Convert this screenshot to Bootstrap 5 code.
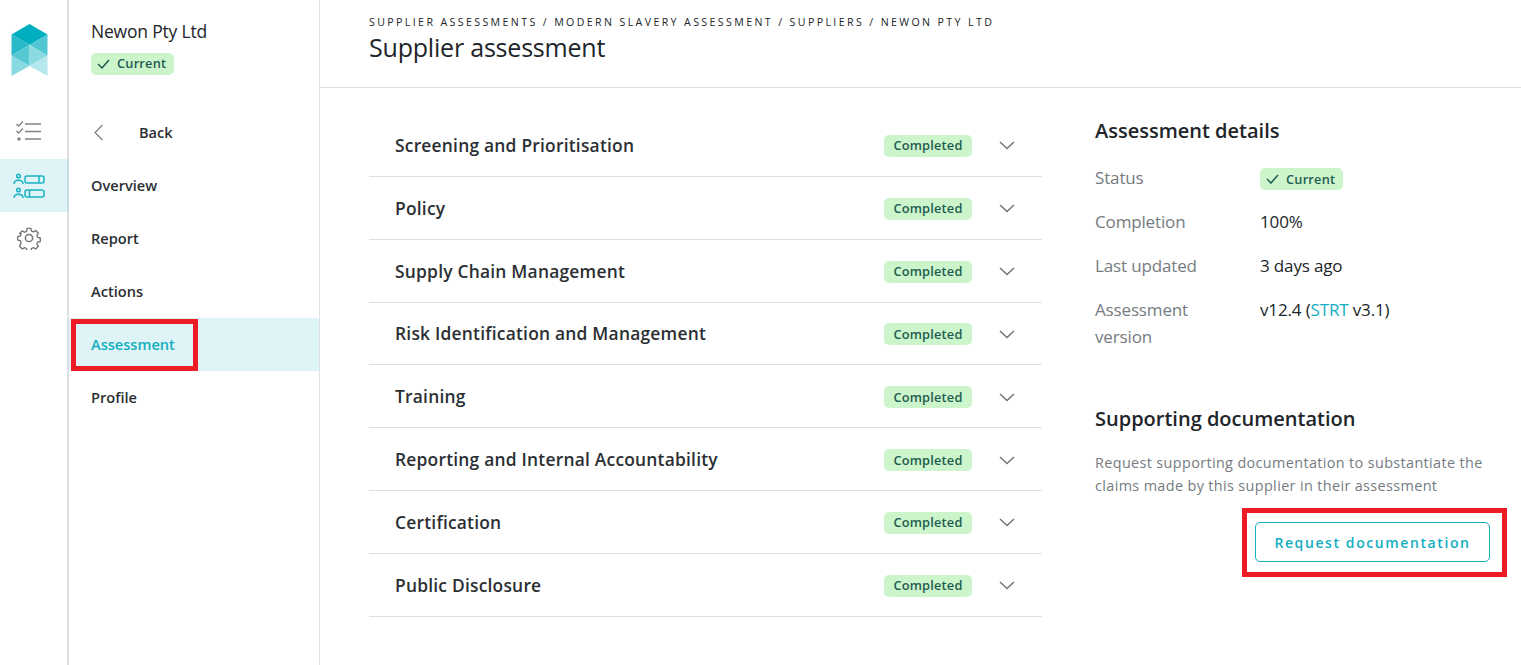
<!DOCTYPE html>
<html lang="en">
<head>
  <meta charset="UTF-8">
  <title>Supplier assessment</title>
  <meta name="viewport" content="width=device-width, initial-scale=1">
  <link href="https://cdn.jsdelivr.net/npm/bootstrap@5.3.0/dist/css/bootstrap.min.css" rel="stylesheet">
  <style>
    html, body { height: 100%; overflow: hidden; }
    body { font-family: "Open Sans", "Noto Sans", sans-serif; color: #212529; background: #fff; }
    .shell { height: 665px; }
    .rail { width: 69px; flex: none; border-right: 2px solid #e0e0e0; padding-top: 24px; }
    .rail-logo { display: block; margin-left: 11px; margin-bottom: 30px; }
    .rail-item { height: 53px; display: flex; align-items: center; padding-left: 13px; }
    .rail-item.on { background: #def4f6; border-right: 2px solid #c5dfe3; margin-right: -2px; }
    .rail-list { margin-left: 3px; margin-top: -2px; }
    .rail-gear { margin-left: 4px; margin-top: -2px; }
    .side { width: 251px; flex: none; border-right: 1px solid #e0e0e0; }
    .side-head { padding: 19px 22px 0; height: 106px; }
    .side-name { font-size: 17.500px; line-height: 24px; letter-spacing: -.2px; margin-bottom: 8px; }
    .pill { display: inline-flex; align-items: center; justify-content: center; height: 22px; border-radius: 5px; background: #ccf5cb; color: #1f5c50; font-size: 12.800px; font-weight: 600; letter-spacing: .2px; }
    .pill-icon { padding: 0 8px 0 6px; gap: 7px; }
    .pill-text { width: 88px; flex: none; }
    .side-link { display: flex; align-items: center; height: 53px; padding-left: 22px; font-size: 14.600px; font-weight: 600; color: #2b2f33; text-decoration: none; }
    .side-link.on { background: #def4f6; color: #12aebf; }
    .side-back { gap: 35px; padding-left: 24px; }
    .main-head { height: 88px; border-bottom: 1px solid #e0e0e0; padding: 15px 49px 0; }
    .crumbs { font-size: 10.600px; line-height: 15px; letter-spacing: 2.390px; color: #212529; text-transform: uppercase; white-space: nowrap; }
    .page-title { font-size: 25px; line-height: 35px; font-weight: 400; letter-spacing: -.2px; margin: 0; }
    .main-body { padding: 26px 0 0 49px; gap: 53px; }
    .sections { width: 673px; flex: none; }
    .sec-row { height: 62.850px; display: flex; align-items: center; padding: 2px 0 0 26px; border-bottom: 1px solid #e0e0e0; }
    .sec-name { font-size: 17.400px; font-weight: 600; letter-spacing: .22px; color: #2b2f33; flex-grow: 1; margin-top: -2px; }
    .sec-chev { margin: 0 27px; flex: none; }
    .info { width: 400px; flex: none; padding-top: 3px; }
    .info-title { font-size: 20px; line-height: 28px; font-weight: 600; margin: 0; color: #212529; }
    .info-head { margin-bottom: 19px; }
    .info-row { display: flex; font-size: 17px; line-height: 27px; letter-spacing: -.15px; margin-bottom: 17px; }
    .info-key { width: 165px; flex: none; color: #757b80; }
    .info-key-wrap { width: 110px; margin-right: 55px; }
    .info-link { color: #12aebf; text-decoration: none; }
    .docs-title { margin-top: 55px; }
    .docs-text { font-size: 14.400px; line-height: 23px; letter-spacing: .37px; color: #757b80; margin: 18px 0 0; white-space: nowrap; }
    .doc-btn { --bs-btn-color: #12aebf; --bs-btn-border-color: #12aebf; --bs-btn-hover-bg: #def4f6; --bs-btn-hover-color: #12aebf; --bs-btn-hover-border-color: #12aebf; width: 235px; height: 40px; font-size: 14px; font-weight: 600; letter-spacing: 1.600px; padding: 0; border-radius: 5px; margin: 25px 0 0 160px; }
    .mark-box { position: absolute; border: 5px solid #ed1c24; pointer-events: none; }
    .mark-nav { left: 71px; top: 319px; width: 127px; height: 52px; }
    .mark-btn { left: 1242px; top: 508px; width: 265px; height: 69px; }
  </style>
</head>
<body>
  <div class="shell d-flex position-relative">

    <!-- icon rail -->
    <div class="rail">
      <svg class="rail-logo" width="37" height="52" viewBox="0 0 37 52">
        <polygon points="18.500,0 36.500,10.500 18.500,21 0.500,10.500" fill="#00afc0"/>
        <polygon points="0.500,10.500 18.500,21 0.500,31.500" fill="#29bac9"/>
        <polygon points="36.500,10.500 18.500,21 36.500,31.500" fill="#4fc6d2"/>
        <polygon points="0.500,31.500 18.500,21 18.500,42" fill="#55c8d4"/>
        <polygon points="36.500,31.500 18.500,21 18.500,42" fill="#8bd9e1"/>
        <polygon points="0.500,31.500 18.500,42 0.500,52" fill="#88d9e1"/>
        <polygon points="36.500,31.500 18.500,42 36.500,52" fill="#b4e8ed"/>
      </svg>
      <div class="rail-item">
        <svg class="rail-list" width="26" height="21" viewBox="0 0 26 21" fill="none" stroke="#7f8487" stroke-width="1.400">
          <path d="M.500 3l2 2 4.500-4.500M.500 10l2 2 4.500-4.500"/>
          <path d="M9 3h16M9 10.500h16M9 18h16"/>
          <circle cx="3" cy="18" r="1" fill="#7f8487"/>
        </svg>
      </div>
      <div class="rail-item on">
        <svg width="32" height="26" viewBox="0 0 32 26" fill="none" stroke="#19b3c3" stroke-width="1.500">
          <circle cx="5.500" cy="3" r="1.800"/>
          <path d="M1 11c0-5 9-5 9 0"/>
          <circle cx="5.500" cy="17" r="1.800"/>
          <path d="M1 25c0-5 9-5 9 0"/>
          <rect x="12" y="3" width="19" height="7" rx="2"/>
          <path d="M26 3v7"/>
          <rect x="12" y="17" width="19" height="7" rx="2"/>
          <path d="M16.500 17v7"/>
        </svg>
      </div>
      <div class="rail-item">
        <svg class="rail-gear" width="24" height="24" viewBox="0 0 24 24" fill="none" stroke="#6f7478" stroke-width="1.500" stroke-linejoin="round">
          <circle cx="12" cy="12" r="3.600"/>
          <path d="M9.800 1h4.400l.6 3 2.300 1 2.600-1.600 3 3.100-1.700 2.500.9 2.300 3 .7v4l-3 .7-.9 2.300 1.700 2.500-3 3.100-2.600-1.600-2.300 1-.6 3H9.800l-.6-3-2.300-1-2.600 1.600-3-3.100L3 17.400l-.9-2.300-3-.7v-4l3-.7.900-2.300L1.300 6.900l3-3.100L6.900 5.400l2.300-1z" transform="translate(1.500 1.500) scale(.875)"/>
        </svg>
      </div>
    </div>

    <!-- section nav -->
    <div class="side">
      <div class="side-head">
        <div class="side-name">Newon Pty Ltd</div>
        <span class="pill pill-icon">
          <svg width="13" height="10" viewBox="0 0 13 10" fill="none" stroke="#1f5c50" stroke-width="1.500"><path d="M1 5l4 4 7-8"/></svg>
          Current
        </span>
      </div>
      <a class="side-link side-back" href="#">
        <svg width="11" height="17" viewBox="0 0 11 17" fill="none" stroke="#7f8487" stroke-width="1.300"><path d="M9.500 1L2 8.500 9.500 16"/></svg>
        Back
      </a>
      <a class="side-link" href="#">Overview</a>
      <a class="side-link" href="#">Report</a>
      <a class="side-link" href="#">Actions</a>
      <a class="side-link on" href="#">Assessment</a>
      <a class="side-link" href="#">Profile</a>
    </div>

    <!-- main -->
    <div class="flex-grow-1">
      <div class="main-head">
        <div class="crumbs">Supplier assessments / Modern slavery assessment / Suppliers / Newon Pty Ltd</div>
        <h1 class="page-title">Supplier assessment</h1>
      </div>
      <div class="main-body d-flex">
        <div class="sections" id="sections"></div>
        <div class="info">
          <h2 class="info-title info-head">Assessment details</h2>
          <div class="info-row"><div class="info-key">Status</div><div><span class="pill pill-icon">
            <svg width="13" height="10" viewBox="0 0 13 10" fill="none" stroke="#1f5c50" stroke-width="1.500"><path d="M1 5l4 4 7-8"/></svg>
            Current</span></div></div>
          <div class="info-row"><div class="info-key">Completion</div><div>100%</div></div>
          <div class="info-row"><div class="info-key">Last updated</div><div>3 days ago</div></div>
          <div class="info-row"><div class="info-key info-key-wrap">Assessment version</div><div>v12.4 (<a class="info-link" href="#">STRT</a> v3.1)</div></div>
          <h2 class="info-title docs-title">Supporting documentation</h2>
          <p class="docs-text">Request supporting documentation to substantiate the<br>claims made by this supplier in their assessment</p>
          <button type="button" class="btn doc-btn d-block">Request documentation</button>
        </div>
      </div>
    </div>

    <!-- annotation boxes -->
    <div class="mark-box mark-nav"></div>
    <div class="mark-box mark-btn"></div>
  </div>

  <script src="https://cdn.jsdelivr.net/npm/bootstrap@5.3.0/dist/js/bootstrap.bundle.min.js"></script>
  <script>
    const sections = ['Screening and Prioritisation', 'Policy', 'Supply Chain Management', 'Risk Identification and Management', 'Training', 'Reporting and Internal Accountability', 'Certification', 'Public Disclosure'];
    const holder = document.getElementById('sections');
    sections.forEach(name => {
      holder.innerHTML += `
        <div class="sec-row">
          <div class="sec-name">${name}</div>
          <span class="pill pill-text">Completed</span>
          <svg class="sec-chev" width="16" height="9" viewBox="0 0 16 9" fill="none" stroke="#6f7478" stroke-width="1.500"><path d="M1 1l7 6.500L15 1"/></svg>
        </div>`;
    });
  </script>
</body>
</html>
